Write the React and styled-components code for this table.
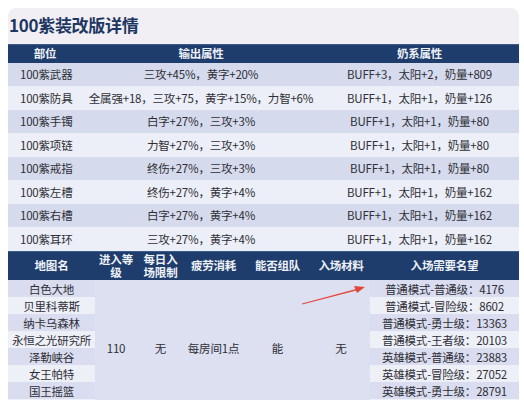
import React from "react";
import styled, { createGlobalStyle } from "styled-components";

const GlobalStyle = createGlobalStyle`
  html, body {
    margin: 0;
    padding: 0;
    background: #ffffff;
    overflow: hidden;
  }
  body {
    font-family: "Noto Sans CJK SC", "Noto Sans", "Liberation Sans", sans-serif;
  }
`;

const Card = styled.div`
  position: relative;
  margin: 8px 0 0 8px;
  width: 511px;
  background: #f1eff4;
  border-radius: 8px 8px 0 0;
`;

const Title = styled.h1`
  margin: 0;
  height: 36px;
  padding: 0 0 0 1px;
  line-height: 33px;
  font-size: 17px;
  font-weight: 700;
  color: #1d3763;
  letter-spacing: -0.3px;
`;

const Table = styled.table`
  width: 511px;
  border-collapse: collapse;
  table-layout: fixed;
  font-size: 11.5px;
  letter-spacing: -0.2px;
  color: #2e2e36;
`;

const HeadRow = styled.tr`
  background: #1f3d6c;
  height: ${({ $h }) => $h}px;
`;

const Th = styled.th`
  padding: 0;
  font-weight: 700;
  color: #eef1f8;
  text-align: center;
  line-height: 13px;
  border-top: 1px solid #3b5b88;
`;

const Row = styled.tr`
  height: ${({ $h }) => $h}px;
  background: ${({ $odd }) => ($odd ? "#d5dbed" : "#eceff7")};
`;

const Td = styled.td`
  padding: ${({ $left }) => ($left ? "0 0 0 12px" : "0")};
  text-align: ${({ $left }) => ($left ? "left" : "center")};
  white-space: nowrap;
  line-height: 14px;
`;

const MapRow = styled.tr`
  height: 17px;
`;

const StripeTd = styled.td`
  padding: 0;
  text-align: center;
  white-space: nowrap;
  line-height: 14px;
  background: ${({ $odd }) => ($odd ? "#d9ddef" : "#eef0f8")};
`;

const MergedTd = styled.td`
  padding: 0;
  text-align: center;
  vertical-align: middle;
  background: #dce0f0;
`;

const Arrow = styled.svg`
  position: absolute;
  left: 286px;
  top: 270px;
  overflow: visible;
  pointer-events: none;
`;

const gear = [
  ["100紫武器", "三攻+45%，黄字+20%", "BUFF+3，太阳+2，奶量+809"],
  ["100紫防具", "全属强+18，三攻+75，黄字+15%，力智+6%", "BUFF+1，太阳+1，奶量+126"],
  ["100紫手镯", "白字+27%，三攻+3%", "BUFF+1，太阳+1，奶量+80"],
  ["100紫项链", "力智+27%，三攻+3%", "BUFF+1，太阳+1，奶量+80"],
  ["100紫戒指", "终伤+27%，三攻+3%", "BUFF+1，太阳+1，奶量+80"],
  ["100紫左槽", "终伤+27%，黄字+4%", "BUFF+1，太阳+1，奶量+162"],
  ["100紫右槽", "白字+27%，黄字+4%", "BUFF+1，太阳+1，奶量+162"],
  ["100紫耳环", "三攻+27%，黄字+4%", "BUFF+1，太阳+1，奶量+162"],
];

// last row lies below the visible area; it only keeps the merged cells centred
const maps = [
  ["白色大地", "普通模式-普通级：4176"],
  ["贝里科蒂斯", "普通模式-冒险级：8602"],
  ["纳卡乌森林", "普通模式-勇士级：13363"],
  ["永恒之光研究所", "普通模式-王者级：20103"],
  ["泽勒峡谷", "英雄模式-普通级：23883"],
  ["女王帕特", "英雄模式-冒险级：27052"],
  ["国王摇篮", "英雄模式-勇士级：28791"],
  ["", ""],
];

export default function App() {
  return (
    <>
      <GlobalStyle />
      <Card>
        <Title>100紫装改版详情</Title>

        <Table>
          <colgroup>
            <col style={{ width: 74 }} />
            <col style={{ width: 238 }} />
            <col style={{ width: 199 }} />
          </colgroup>
          <thead>
            <HeadRow $h={18}>
              <Th>部位</Th>
              <Th>输出属性</Th>
              <Th>奶系属性</Th>
            </HeadRow>
          </thead>
          <tbody>
            {gear.map((g, i) => (
              <Row key={g[0]} $h={23.5} $odd={i % 2 === 0}>
                <Td $left>{g[0]}</Td>
                <Td>{g[1]}</Td>
                <Td>{g[2]}</Td>
              </Row>
            ))}
          </tbody>
        </Table>

        <Table>
          <colgroup>
            <col style={{ width: 87 }} />
            <col style={{ width: 42 }} />
            <col style={{ width: 47 }} />
            <col style={{ width: 59 }} />
            <col style={{ width: 69 }} />
            <col style={{ width: 58 }} />
            <col style={{ width: 149 }} />
          </colgroup>
          <thead>
            <HeadRow $h={29}>
              <Th>地图名</Th>
              <Th>进入等<br />级</Th>
              <Th>每日入<br />场限制</Th>
              <Th>疲劳消耗</Th>
              <Th>能否组队</Th>
              <Th>入场材料</Th>
              <Th>入场需要名望</Th>
            </HeadRow>
          </thead>
          <tbody>
            {maps.map((m, i) => (
              <MapRow key={i}>
                <StripeTd $odd={i % 2 === 0}>{m[0]}</StripeTd>
                {i === 0 && (
                  <>
                    <MergedTd rowSpan={maps.length}>110</MergedTd>
                    <MergedTd rowSpan={maps.length}>无</MergedTd>
                    <MergedTd rowSpan={maps.length}>每房间1点</MergedTd>
                    <MergedTd rowSpan={maps.length}>能</MergedTd>
                    <MergedTd rowSpan={maps.length}>无</MergedTd>
                  </>
                )}
                <StripeTd $odd={i % 2 === 0}>{m[1]}</StripeTd>
              </MapRow>
            ))}
          </tbody>
        </Table>

        <Arrow width="80" height="30" viewBox="0 0 80 30">
          <polygon points="8,25.5 64,10.6 64.3,12 8.2,26.6" fill="#e5463c" />
          <polygon points="71,9 60,8 63,15" fill="#e5463c" />
        </Arrow>
      </Card>
    </>
  );
}
